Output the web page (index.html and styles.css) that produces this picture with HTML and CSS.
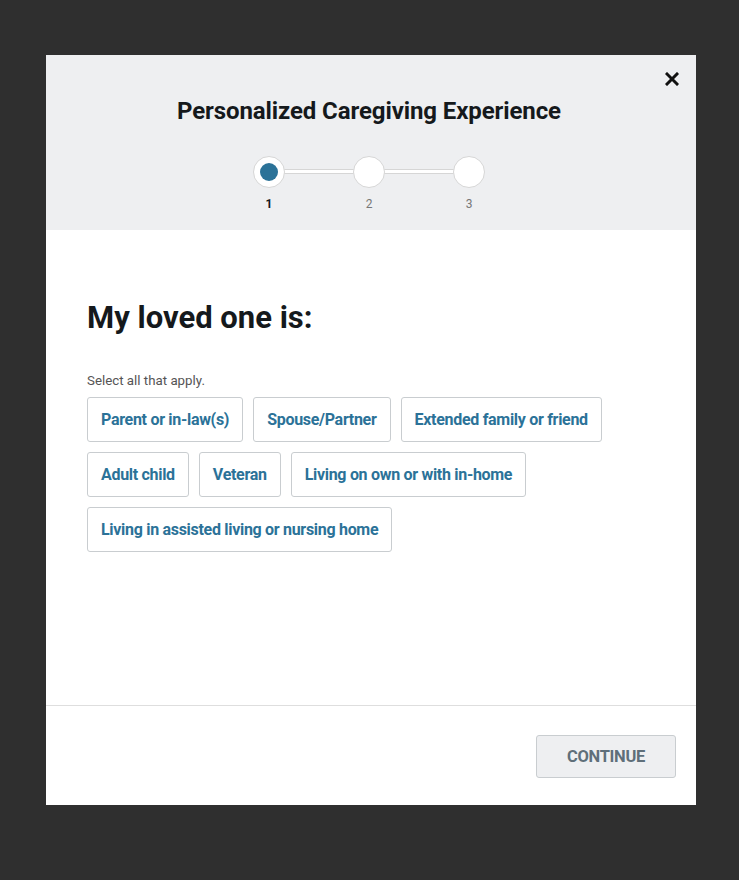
FILE: index.html
```html
<!DOCTYPE html>
<html lang="en">
<head>
    <meta charset="UTF-8">
    <meta name="viewport" content="width=device-width, initial-scale=1.0">
    <title>Personalized Caregiving Experience</title>
    <link rel="stylesheet" href="styles.css">
</head>
<body>
    <div class="overlay">
        <div class="modal">
            <div class="modal-header">
                <button class="close-btn" aria-label="Close">
                    <svg width="14" height="14" viewBox="0 0 14 14">
                        <path d="M2 2 L12 12 M12 2 L2 12" stroke="#111" stroke-width="3" stroke-linecap="square"/>
                    </svg>
                </button>
                <h1 class="modal-title">Personalized Caregiving Experience</h1>
                <div class="stepper">
                    <div class="step active">
                        <div class="step-dot"></div>
                        <span class="step-label">1</span>
                    </div>
                    <div class="step-line"></div>
                    <div class="step">
                        <div class="step-dot"></div>
                        <span class="step-label">2</span>
                    </div>
                    <div class="step-line"></div>
                    <div class="step">
                        <div class="step-dot"></div>
                        <span class="step-label">3</span>
                    </div>
                </div>
            </div>

            <div class="modal-body">
                <h2 class="question">My loved one is:</h2>
                <p class="hint">Select all that apply.</p>
                <div class="options">
                    <button class="option">Parent or in-law(s)</button>
                    <button class="option">Spouse/Partner</button>
                    <button class="option">Extended family or friend</button>
                    <button class="option">Adult child</button>
                    <button class="option">Veteran</button>
                    <button class="option">Living on own or with in-home</button>
                    <button class="option">Living in assisted living or nursing home</button>
                </div>
            </div>

            <div class="modal-footer">
                <button class="continue-btn">CONTINUE</button>
            </div>
        </div>
    </div>
</body>
</html>
```

FILE: styles.css
```css
body {
    margin: 0;
    padding: 0;
    background-color: #2f2f2f;
    font-family: Roboto, "Liberation Sans", sans-serif;
}

.overlay {
    height: 880px;
    padding-top: 55px;
    box-sizing: border-box;
}

.modal {
    width: 650px;
    height: 750px;
    margin-left: 46px;
    background: white;
    display: flex;
    flex-direction: column;
}

.modal-header {
    position: relative;
    height: 175px;
    background-color: #eeeff1;
    display: flex;
    flex-direction: column;
    align-items: center;
    box-sizing: border-box;
    padding: 41px 4px 0 0;
}

.close-btn {
    position: absolute;
    top: 17px;
    right: 17px;
    width: 14px;
    height: 14px;
    padding: 0;
    border: none;
    background: none;
    cursor: pointer;
}

.close-btn svg {
    display: block;
}

.modal-title {
    margin: 0;
    font-size: 24px;
    font-weight: 700;
    color: #15191c;
    letter-spacing: -0.1px;
    line-height: 30px;
}

.stepper {
    display: flex;
    align-items: flex-start;
    margin-top: 30px;
}

.step {
    width: 32px;
    display: flex;
    flex-direction: column;
    align-items: center;
}

.step-dot {
    width: 32px;
    height: 32px;
    border-radius: 50%;
    background: white;
    border: 1px solid #d6d6d6;
    box-sizing: border-box;
    position: relative;
}

.step.active .step-dot::after {
    content: "";
    position: absolute;
    top: 6px;
    left: 6px;
    width: 18px;
    height: 18px;
    border-radius: 50%;
    background-color: #2b7298;
}

.step-line {
    width: 70px;
    height: 5px;
    margin: 13px -1px 0 -1px;
    background: white;
    border-top: 1px solid #d6d6d6;
    border-bottom: 1px solid #d6d6d6;
    box-sizing: border-box;
}

.step-label {
    margin-top: 9px;
    font-size: 12px;
    color: #777;
    line-height: 14px;
}

.step.active .step-label {
    color: #15191c;
    font-weight: 700;
}

.modal-body {
    flex: 1;
    padding: 69px 40px 0 41px;
    border-bottom: 1px solid #dedede;
}

.question {
    margin: 0;
    font-size: 31px;
    font-weight: 700;
    color: #15191c;
    line-height: 38px;
}

.hint {
    margin: 36px 0 8px 0;
    font-size: 13.3px;
    color: #555;
    line-height: 16px;
}

.options {
    display: flex;
    flex-wrap: wrap;
    gap: 10px;
    max-width: 540px;
}

.option {
    height: 45px;
    padding: 0 13px;
    background: white;
    border: 1px solid #c9cdd0;
    border-radius: 3px;
    font-family: Roboto, "Liberation Sans", sans-serif;
    font-size: 16px;
    font-weight: 700;
    color: #2b7298;
    letter-spacing: -0.3px;
    cursor: pointer;
}

.option:hover {
    border-color: #2b7298;
}

.modal-footer {
    height: 99px;
    display: flex;
    justify-content: flex-end;
    align-items: flex-start;
    padding: 29px 20px 0 0;
    box-sizing: border-box;
}

.continue-btn {
    width: 140px;
    height: 43px;
    background-color: #eeeff1;
    border: 1px solid #c9cdd0;
    border-radius: 3px;
    font-family: Roboto, "Liberation Sans", sans-serif;
    font-size: 16.5px;
    font-weight: 700;
    color: #5f6f7a;
    letter-spacing: -0.3px;
    cursor: pointer;
}
```
